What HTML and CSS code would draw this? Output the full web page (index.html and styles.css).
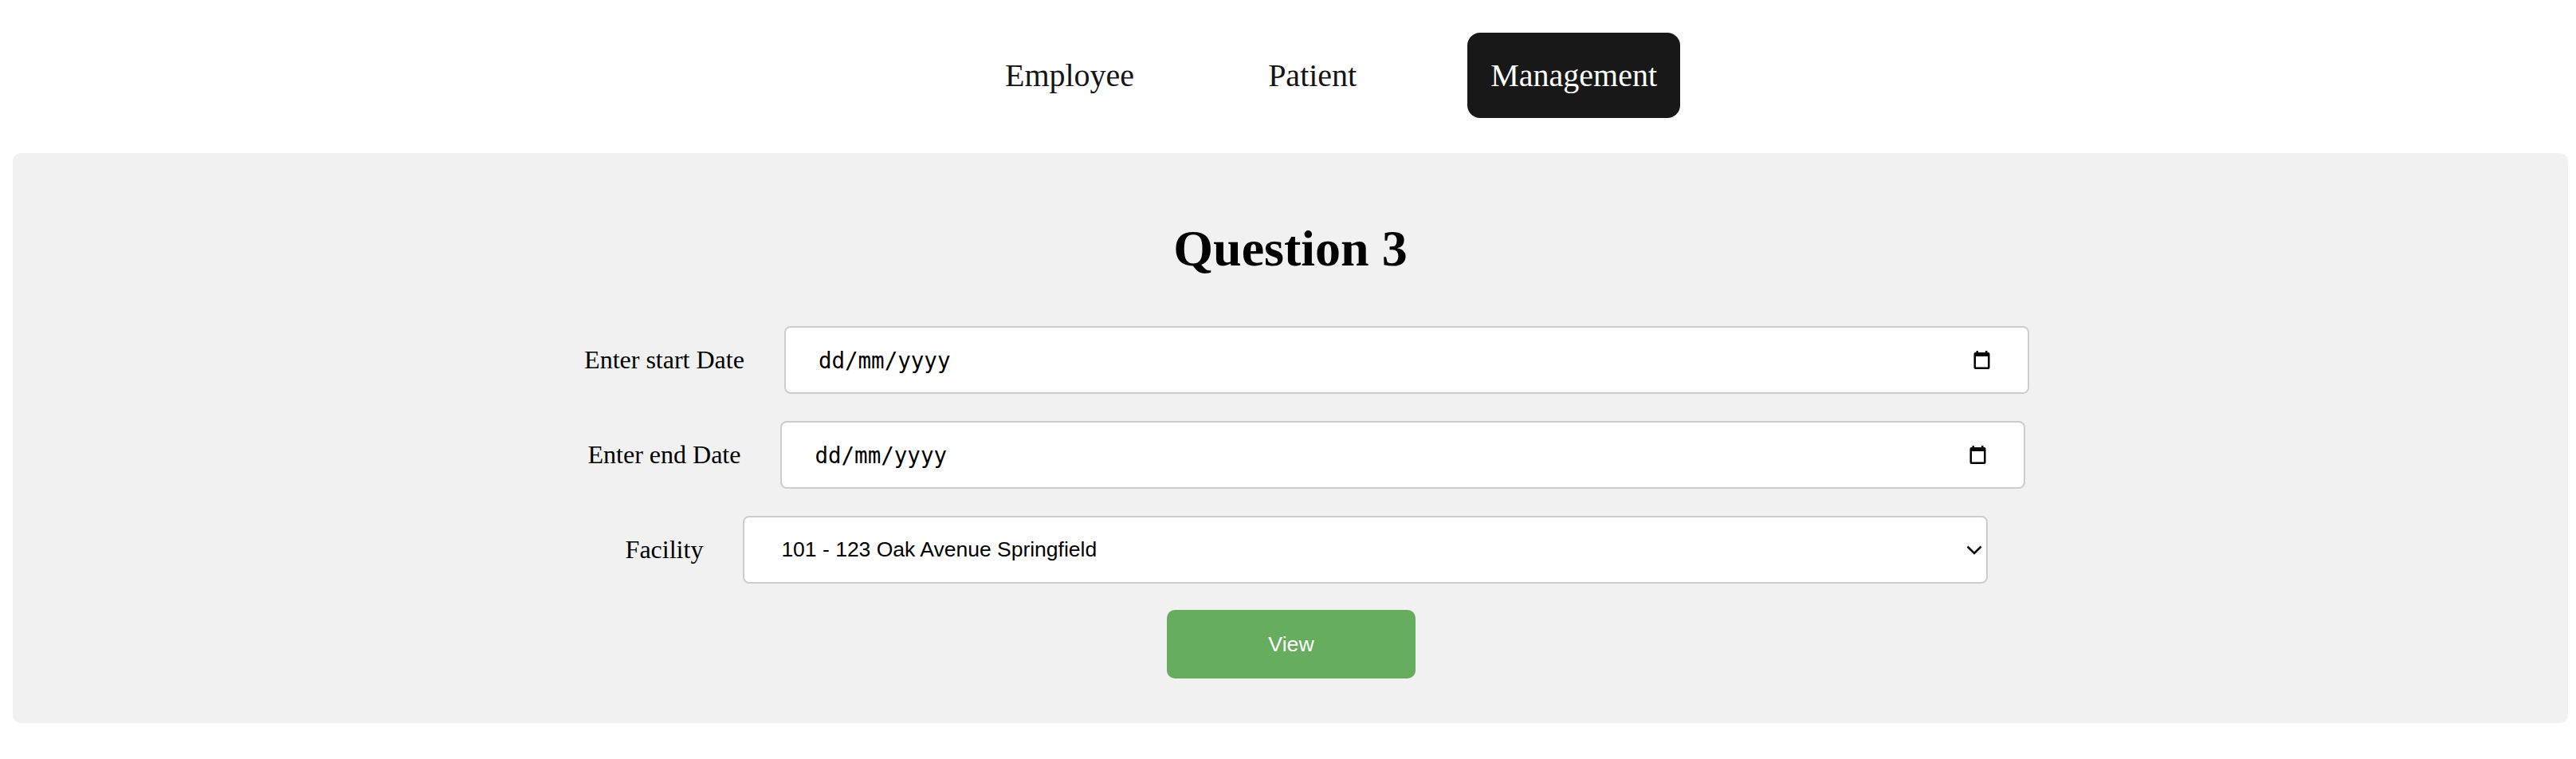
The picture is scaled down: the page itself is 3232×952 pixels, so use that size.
FILE: index.html
```html
<!DOCTYPE html>
<html lang="en">
<head>
<meta charset="utf-8">
<title>Question 3</title>
<link rel="stylesheet" href="styles.css">
</head>
<body>
  <nav class="nav">
    <a class="nav-item">Employee</a>
    <a class="nav-item">Patient</a>
    <a class="nav-item active">Management</a>
  </nav>
  <main class="panel">
    <h1 class="title">Question 3</h1>
    <div class="form">
      <div class="row">
        <label class="label">Enter start Date</label>
        <div class="field date">
          <span class="date-text">dd/mm/yyyy</span>
          <svg class="cal" width="21" height="23" viewBox="0 0 21 23"><rect x="3.5" y="0" width="2.5" height="4" fill="#000"/><rect x="15" y="0" width="2.5" height="4" fill="#000"/><rect x="0.5" y="2" width="20" height="21" rx="2" fill="#000"/><rect x="3" y="7" width="15" height="13.5" fill="#fff"/></svg>
        </div>
      </div>
      <div class="row">
        <label class="label">Enter end Date</label>
        <div class="field date">
          <span class="date-text">dd/mm/yyyy</span>
          <svg class="cal" width="21" height="23" viewBox="0 0 21 23"><rect x="3.5" y="0" width="2.5" height="4" fill="#000"/><rect x="15" y="0" width="2.5" height="4" fill="#000"/><rect x="0.5" y="2" width="20" height="21" rx="2" fill="#000"/><rect x="3" y="7" width="15" height="13.5" fill="#fff"/></svg>
        </div>
      </div>
      <div class="row">
        <label class="label">Facility</label>
        <div class="field select">
          <span class="select-text">101 - 123 Oak Avenue Springfield</span>
          <svg class="chev" width="20" height="12" viewBox="0 0 20 12"><polyline points="1.5,1.5 10,10 18.5,1.5" fill="none" stroke="#111" stroke-width="2.6"/></svg>
        </div>
      </div>
      <button class="view">View</button>
    </div>
  </main>
</body>
</html>
```

FILE: styles.css
```css
html, body {
  background: #ffffff;
}
body {
  margin: 8px;
  font-family: "Liberation Serif", "Times New Roman", serif;
  color: #000;
}
.nav {
  display: flex;
  justify-content: center;
  gap: 110px;
  padding-left: 108px;
  margin-top: 33px;
  margin-bottom: 44px;
}
.nav-item {
  font-size: 40px;
  line-height: 47px;
  padding: 30px 29px;
  border-radius: 16px;
  color: #151515;
}
.nav-item.active {
  background: #181818;
  color: #ffffff;
}
.panel {
  margin: 0 2px 0 8px;
  background: #f1f1f1;
  border-radius: 10px;
  padding: 40px 0 56px;
}
.title {
  font-size: 64px;
  line-height: 74px;
  font-weight: bold;
  text-align: center;
  margin: 43px 0 60px;
}
.form {
  display: flex;
  flex-direction: column;
  align-items: stretch;
  gap: 34px;
}
.row {
  display: flex;
  align-items: center;
  justify-content: center;
  gap: 50px;
  padding-left: 41px;
}
.label {
  font-size: 32px;
  line-height: 37px;
}
.field {
  width: 1562px;
  height: 85px;
  box-sizing: border-box;
  border: 2px solid #cdcdcd;
  border-radius: 8px;
  background: #ffffff;
  display: flex;
  align-items: center;
  justify-content: space-between;
}
.date {
  padding: 0 47px 0 41px;
}
.date-text {
  font-family: "DejaVu Sans Mono", "Liberation Mono", monospace;
  font-size: 27.5px;
  color: #000;
}
.cal {
  display: block;
}
.select {
  padding: 0 5px 0 46px;
}
.select-text {
  font-family: "Liberation Sans", Arial, sans-serif;
  font-size: 26.5px;
  color: #000;
}
.chev {
  display: block;
}
.view {
  align-self: center;
  width: 312px;
  height: 86px;
  margin: -1px 0 0 2px;
  border: none;
  border-radius: 10px;
  background: #67ad5e;
  color: #ffffff;
  font-family: "Liberation Sans", Arial, sans-serif;
  font-size: 26.67px;
}
```
